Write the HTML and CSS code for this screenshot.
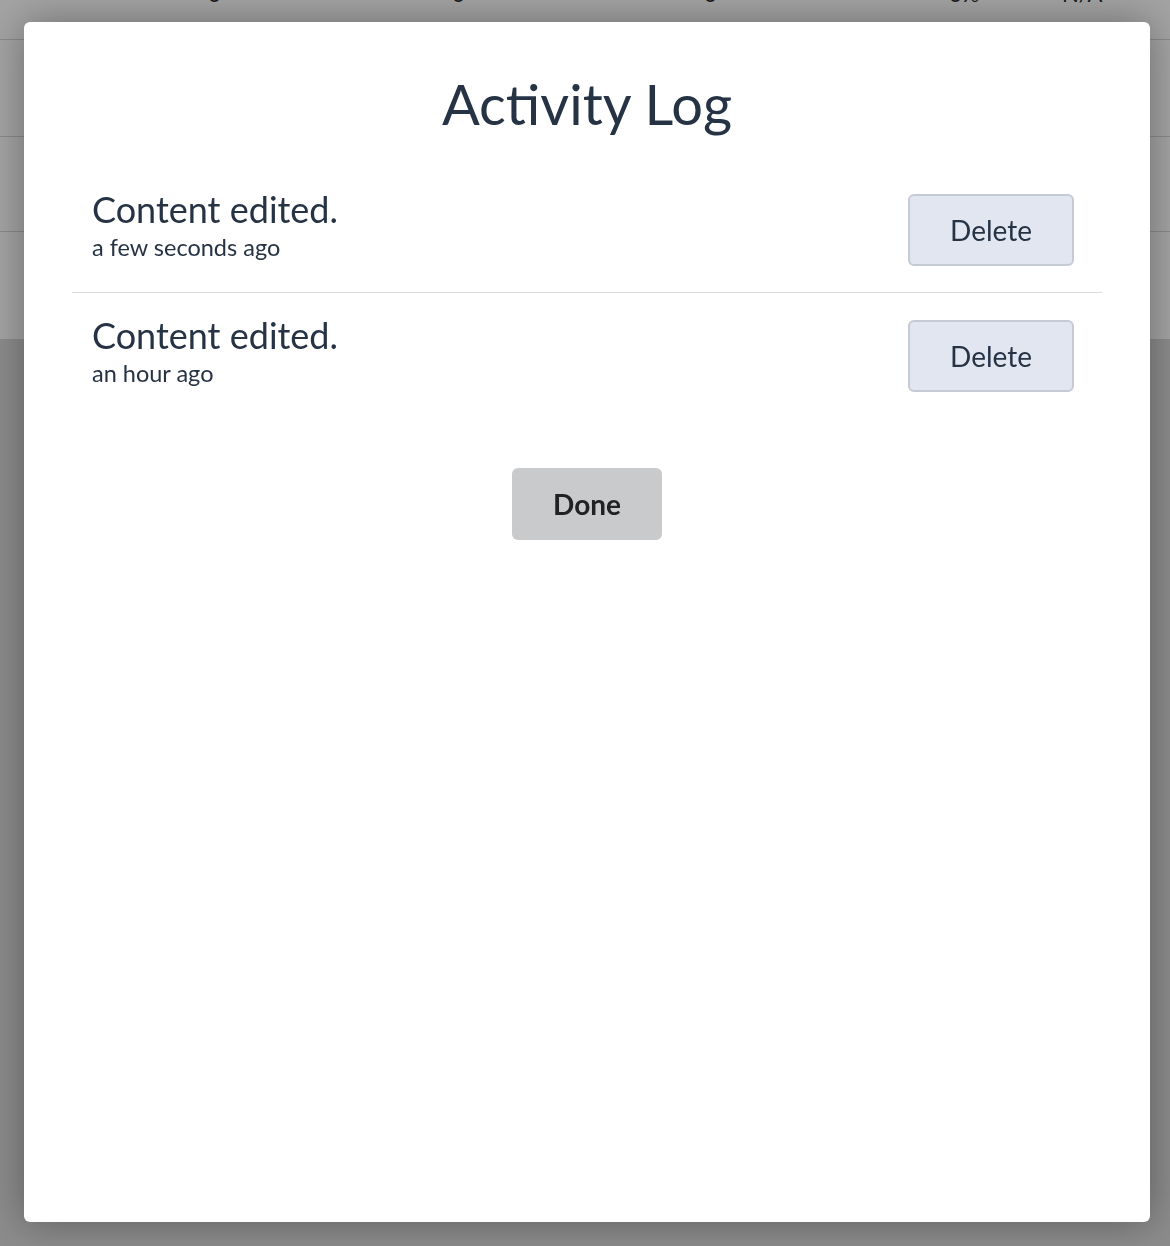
FILE: index.html
```html
<!DOCTYPE html>
<html lang="en">
<head>
    <meta charset="UTF-8">
    <title>Activity Log</title>
    <link rel="stylesheet" href="styles.css">
</head>
<body>
    <!-- page behind the dialog -->
    <div class="page">
        <div class="stats-row stats-head">
            <span>0</span>
            <span>0</span>
            <span>0</span>
            <span>0%</span>
            <span>N/A</span>
        </div>
        <div class="stats-row row-a"></div>
        <div class="stats-row row-b"></div>
        <div class="stats-row row-c"></div>
    </div>

    <div class="overlay"></div>

    <div class="modal">
        <h1 class="modal-title">Activity Log</h1>
        <div class="log-list">
            <div class="log-item">
                <div class="log-text">
                    <div class="log-message">Content edited.</div>
                    <div class="log-time">a few seconds ago</div>
                </div>
                <button class="delete-btn">Delete</button>
            </div>
            <div class="log-item">
                <div class="log-text">
                    <div class="log-message">Content edited.</div>
                    <div class="log-time">an hour ago</div>
                </div>
                <button class="delete-btn">Delete</button>
            </div>
        </div>
        <div class="modal-actions">
            <button class="done-btn">Done</button>
        </div>
    </div>
</body>
</html>
```

FILE: styles.css
```css
:root {
    --text-color: #263345;
    --page-bg: #dadada;
    --line-color: #dcdcdc;
    --border-radius: 6px;
}

body {
    margin: 0;
    font-family: Lato, 'Open Sans', Arial, sans-serif;
    background-color: var(--page-bg);
    color: var(--text-color);
    overflow: hidden;
}

.page {
    margin-top: -30px;
    background: white;
}

.stats-row {
    border-bottom: 1px solid #d6d6d6;
}

.stats-head {
    display: grid;
    grid-template-columns: 208px 244px 252px 245px 113px 1fr;
    height: 69px;
    font-size: 22px;
    line-height: 26px;
    color: #2a2a2a;
}

.stats-head span {
    padding-top: 11px;
}

.stats-head span:first-child {
    grid-column: 2;
}

.row-a { height: 96px; }
.row-b { height: 94px; }
.row-c { height: 107px; border-bottom: none; }

.overlay {
    position: fixed;
    inset: 0;
    background: rgba(0, 0, 0, 0.36);
}

.modal {
    position: fixed;
    left: 24px;
    top: 22px;
    width: 1126px;
    height: 1200px;
    box-sizing: border-box;
    padding-top: 48px;
    background: white;
    border-radius: var(--border-radius);
    box-shadow: 0 0 40px rgba(0, 0, 0, 0.35);
}

.modal-title {
    margin: 0;
    text-align: center;
    font-size: 56px;
    font-weight: 400;
    line-height: 67px;
}

.log-list {
    margin: 30px 48px 0;
}

.log-item {
    display: flex;
    justify-content: space-between;
    align-items: flex-start;
    padding: 24px 28px 26px 20px;
}

.log-item + .log-item {
    border-top: 1px solid var(--line-color);
}

.log-message {
    font-size: 36px;
    line-height: 36px;
}

.log-time {
    margin-top: 6px;
    font-size: 23.5px;
    line-height: 28px;
}

.delete-btn {
    margin-top: 3px;
    width: 166px;
    height: 72px;
    background: #e2e6f0;
    border: 2px solid #c6cad4;
    border-radius: var(--border-radius);
    font-family: inherit;
    font-size: 28px;
    color: var(--text-color);
    cursor: pointer;
}

.modal-actions {
    display: flex;
    justify-content: center;
    margin-top: 50px;
}

.done-btn {
    width: 150px;
    height: 72px;
    background: #c9cacc;
    border: none;
    border-radius: var(--border-radius);
    font-family: inherit;
    font-size: 28px;
    font-weight: 700;
    color: #222;
    cursor: pointer;
}
```
